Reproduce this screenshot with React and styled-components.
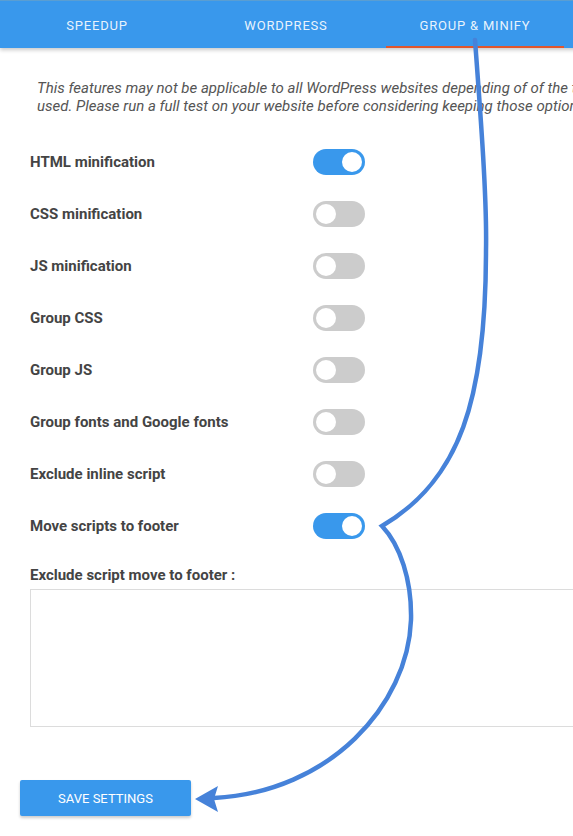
import styled, { createGlobalStyle } from 'styled-components'

const GlobalStyle = createGlobalStyle`
  html, body {
    margin: 0;
    padding: 0;
    overflow: hidden;
    background: #fff;
    font-family: Roboto, 'Liberation Sans', sans-serif;
  }
`

const colors = {
  blue: '#3998ec',
  arrow: '#4682d9',
  accent: '#e2562c',
  label: '#444',
  text: '#555',
  off: '#cccccc',
}

const Page = styled.div`
  position: relative;
  width: 640px;
  height: 836px;
`

const Header = styled.nav`
  display: flex;
  gap: 11px;
  height: 47px;
  padding-left: 8px;
  background: ${colors.blue};
  border-top: 1px solid #5a9ed2;
  box-shadow: 0 2px 4px rgba(0, 0, 0, 0.22);
`

const Tab = styled.div`
  width: 178px;
  display: flex;
  align-items: center;
  justify-content: center;
  font-size: 13px;
  letter-spacing: 0.8px;
  text-transform: uppercase;
  color: rgba(255, 255, 255, 0.9);
  border-bottom: 2px solid ${(p) => (p.active ? colors.accent : 'transparent')};
  box-sizing: border-box;
  padding-top: 3px;
`

const Content = styled.main`
  padding: 31px 0 0 30px;
`

const Notice = styled.p`
  margin: 0 0 21px 7px;
  font-size: 15px;
  line-height: 18px;
  font-style: italic;
  color: ${colors.text};
  white-space: nowrap;
`

const OptionRow = styled.div`
  display: grid;
  grid-template-columns: 283px 52px;
  align-items: center;
  height: 52px;
`

const Label = styled.label`
  font-size: 15px;
  font-weight: bold;
  color: ${colors.label};
`

const Switch = styled.span`
  position: relative;
  display: block;
  width: 52px;
  height: 26px;
  border-radius: 13px;
  background: ${(p) => (p.on ? colors.blue : colors.off)};

  &::after {
    content: '';
    position: absolute;
    top: 3px;
    left: ${(p) => (p.on ? '29px' : '3px')};
    width: 20px;
    height: 20px;
    border-radius: 50%;
    background: #fff;
  }
`

const FieldLabel = styled(Label)`
  display: block;
  line-height: 18px;
  margin: 14px 0 5px;
`

const TextArea = styled.textarea`
  display: block;
  width: 600px;
  height: 138px;
  box-sizing: border-box;
  border: 1px solid #dcdcdc;
  resize: none;
  outline: none;
`

const SaveButton = styled.button`
  margin: 53px 0 0 -10px;
  width: 171px;
  height: 36px;
  border: none;
  border-radius: 2px;
  background: ${colors.blue};
  color: #fff;
  font-family: Roboto, 'Liberation Sans', sans-serif;
  font-size: 13px;
  text-transform: uppercase;
  box-shadow: 0 2px 3px rgba(0, 0, 0, 0.2);
  cursor: pointer;
`

const Annotation = styled.svg`
  position: absolute;
  top: 0;
  left: 0;
  width: 573px;
  height: 836px;
  pointer-events: none;
`

const options = [
  ['HTML minification', true],
  ['CSS minification', false],
  ['JS minification', false],
  ['Group CSS', false],
  ['Group JS', false],
  ['Group fonts and Google fonts', false],
  ['Exclude inline script', false],
  ['Move scripts to footer', true],
]

const App = () => {
  return (
    <Page>
      <GlobalStyle />
      <Header>
        <Tab>Speedup</Tab>
        <Tab>WordPress</Tab>
        <Tab active>Group &amp; Minify</Tab>
      </Header>
      <Content>
        <Notice>
          This features may not be applicable to all WordPress websites depending of of the theme
          <br />
          used. Please run a full test on your website before considering keeping those options.
        </Notice>
        {options.map(([name, on]) => (
          <OptionRow key={name}>
            <Label>{name}</Label>
            <Switch on={on ? 1 : 0} />
          </OptionRow>
        ))}
        <FieldLabel>Exclude script move to footer :</FieldLabel>
        <TextArea />
        <SaveButton>Save settings</SaveButton>
      </Content>
      <Annotation viewBox="0 0 573 836">
        <path
          d="M475 40 C481 120 487 200 486 250 C486 400 460 480 382 526 C400 545 412 580 411 620 C408 705 330 792 214 798"
          fill="none"
          stroke={colors.arrow}
          strokeWidth="4.5"
          strokeLinecap="round"
          strokeLinejoin="miter"
        />
        <polygon points="195,799 218,786 214,799 218,812" fill={colors.arrow} />
      </Annotation>
    </Page>
  )
}

export default App
